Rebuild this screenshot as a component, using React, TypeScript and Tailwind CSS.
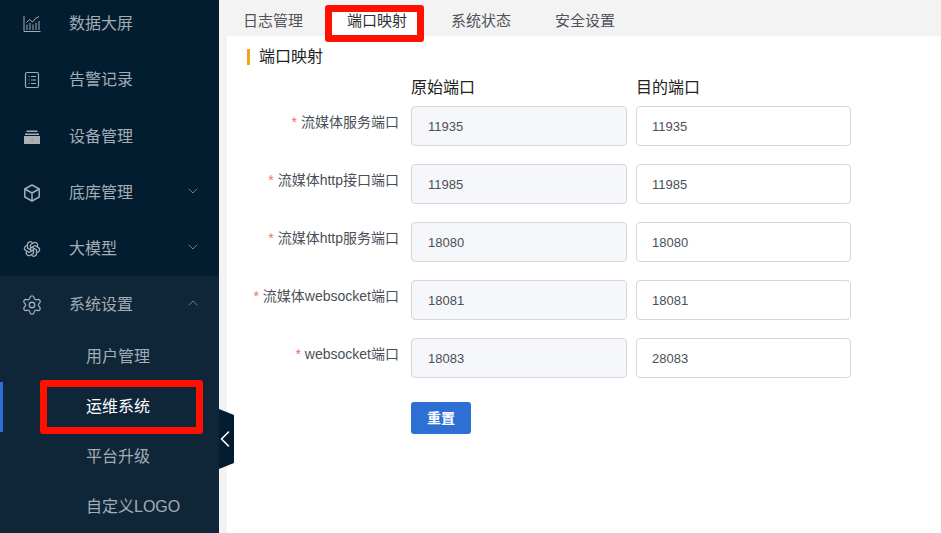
import React from "react";
import { ChevronDown, ChevronUp, ChevronLeft, Settings } from "lucide-react";
import { TbBrandOpenai } from "react-icons/tb";

const font = { fontFamily: '"Liberation Sans", "Noto Sans CJK SC", sans-serif' };

const ChartIcon = () => (
  <svg width="18" height="18" viewBox="0 0 18 18" fill="none" stroke="#a3adb5" strokeWidth="1">
    <path d="M1 1v15.5h16.5" />
    <path d="M4 15V9.5M7 15V8M10 15V9.5M13 15V8M16 15V6" />
    <path d="M3.5 7.5l3-3 3 2.5 3-3.5 3.5-2" />
  </svg>
);
const ListIcon = () => (
  <svg width="18" height="18" viewBox="0 0 18 18" fill="none" stroke="#a3adb5" strokeWidth="1.2">
    <rect x="2.5" y="1.5" width="13" height="15" rx="1.5" />
    <path d="M5.5 5.5h1M8 5.5h5M5.5 9h1M8 9h5M5.5 12.5h1M8 12.5h5" />
  </svg>
);
const DeviceIcon = () => (
  <svg width="18" height="18" viewBox="0 0 18 18" fill="#a9b0b6">
    <rect x="3.5" y="2.5" width="11" height="1.5" />
    <rect x="2" y="5.5" width="14" height="1.5" />
    <path d="M1 8h16v8H1z" />
    <rect x="8.5" y="11" width="1.2" height="1.2" fill="#6f7a83" />
  </svg>
);
const CubeIcon = () => (
  <svg width="18" height="18" viewBox="0 0 18 18" fill="none" stroke="#a3adb5" strokeWidth="1.5" strokeLinejoin="round">
    <path d="M9 1l7.2 4v8L9 17l-7.2-4V5z" />
    <path d="M1.8 5L9 9l7.2-4M9 9v8" />
  </svg>
);

const Item = ({ icon, label, arrow }: { icon: React.ReactNode; label: string; arrow?: "down" | "up" }) => (
  <div className="flex h-[56.25px] items-center pl-[23px] pr-[18px] pt-[2px] text-[#a3adb5] text-[16px]">
    <span className="flex w-[18px] justify-center">{icon}</span>
    <span className="ml-[28px] flex-1">{label}</span>
    {arrow === "down" && <ChevronDown size={16} strokeWidth={1} className="-mt-[4px]" />}
    {arrow === "up" && <ChevronUp size={16} strokeWidth={1} className="-mt-[4px]" />}
  </div>
);

const Sub = ({ label, active }: { label: string; active?: boolean }) => (
  <div
    className={`relative flex h-[50px] items-center pl-[86px] text-[16px] ${active ? "text-white" : "text-[#a3adb5]"}`}
  >
    {active && <span className="absolute left-0 top-0 h-full w-[3px] bg-[#2d6fd2]" />}
    {label}
  </div>
);

const rows = [
  ["流媒体服务端口", "11935", "11935"],
  ["流媒体http接口端口", "11985", "11985"],
  ["流媒体http服务端口", "18080", "18080"],
  ["流媒体websocket端口", "18081", "18081"],
  ["websocket端口", "18083", "28083"],
];

export default function App() {
  return (
    <div style={font} className="relative flex h-[533px] w-[941px] overflow-hidden bg-[#f3f3f3]">
      <aside className="relative h-full w-[219px] shrink-0 bg-[#031d30]">
        <div className="-mt-[5px]">
          <Item icon={<ChartIcon />} label="数据大屏" />
          <Item icon={<ListIcon />} label="告警记录" />
          <Item icon={<DeviceIcon />} label="设备管理" />
          <Item icon={<CubeIcon />} label="底库管理" arrow="down" />
          <Item icon={<TbBrandOpenai size={22} strokeWidth={1.7} />} label="大模型" arrow="down" />
          <div className="h-[300px] bg-[#0f2639]">
            <div className="-mb-[1px]">
              <Item icon={<Settings size={22} strokeWidth={1.4} className="shrink-0" />} label="系统设置" arrow="up" />
            </div>
            <Sub label="用户管理" />
            <Sub label="运维系统" active />
            <Sub label="平台升级" />
            <Sub label="自定义LOGO" />
          </div>
        </div>
      </aside>

      <main className="ml-[8px] flex-1">
        <nav className="flex h-[36px] items-end text-[15px] text-[#4f5359]">
          <span className="ml-[16px] flex h-[31px] items-center pt-[1px]">日志管理</span>
          <span className="ml-[29px] flex h-[31px] items-center bg-white pl-[15px] pr-[10px] pt-[1px] text-[#303133]">端口映射</span>
          <span className="ml-[34px] flex h-[31px] items-center pt-[1px]">系统状态</span>
          <span className="ml-[44px] flex h-[31px] items-center pt-[1px]">安全设置</span>
        </nav>
        <div className="h-[497px] bg-white pl-[20px] pt-[13px]">
          <div className="flex h-[16px] items-center border-l-[3px] border-[#f5a31c] pl-[9px] text-[16px] text-[#222]">
            端口映射
          </div>
          <div className="mt-[13px] flex h-[20px] items-center pl-[164px] text-[16px] text-[#222]">
            <span className="w-[225px]">原始端口</span>
            <span>目的端口</span>
          </div>
          <div className="mt-[8px] flex flex-col gap-[18px]">
            {rows.map(([label, a, b]) => (
              <div key={label} className="flex">
                <div className="w-[152px] whitespace-nowrap pt-[7px] text-right text-[14px] leading-[18px] text-[#4a4f57]">
                  <span className="mr-[4px] text-[#f56c6c]">*</span>
                  {label}
                </div>
                <div className="ml-[12px] flex h-[40px] w-[216px] shrink-0 items-center rounded-[4px] border border-[#d4d6da] bg-[#f5f7fa] pl-[16px] pt-[2px] text-[13px] text-[#4a4f57]">
                  {a}
                </div>
                <div className="ml-[9px] flex h-[40px] w-[215px] shrink-0 items-center rounded-[4px] border border-[#d4d6da] bg-white pl-[15px] pt-[2px] text-[13px] text-[#4a4f57]">
                  {b}
                </div>
              </div>
            ))}
          </div>
          <button className="ml-[164px] mt-[24px] h-[32px] w-[60px] rounded-[3px] bg-[#2d6fd2] text-[14px] font-bold text-white">
            重置
          </button>
        </div>
      </main>

      {/* collapse handle */}
      <div
        className="absolute left-[219px] top-[409px] flex h-[60px] w-[15px] items-center justify-center overflow-hidden bg-[#031d30] text-white"
        style={{ clipPath: "polygon(0 0, 100% 10%, 100% 90%, 0 100%)" }}
      >
        <ChevronLeft size={28} strokeWidth={1.4} className="-ml-[4px] shrink-0" />
      </div>

      {/* annotation boxes */}
      <div className="absolute left-[40px] top-[380px] h-[54px] w-[163px] rounded-[3px] border-[7px] border-[#ff1000]" />
      <div className="absolute left-[325px] top-[5px] h-[37px] w-[99px] rounded-[3px] border-[7px] border-[#ff1000]" />
    </div>
  );
}
